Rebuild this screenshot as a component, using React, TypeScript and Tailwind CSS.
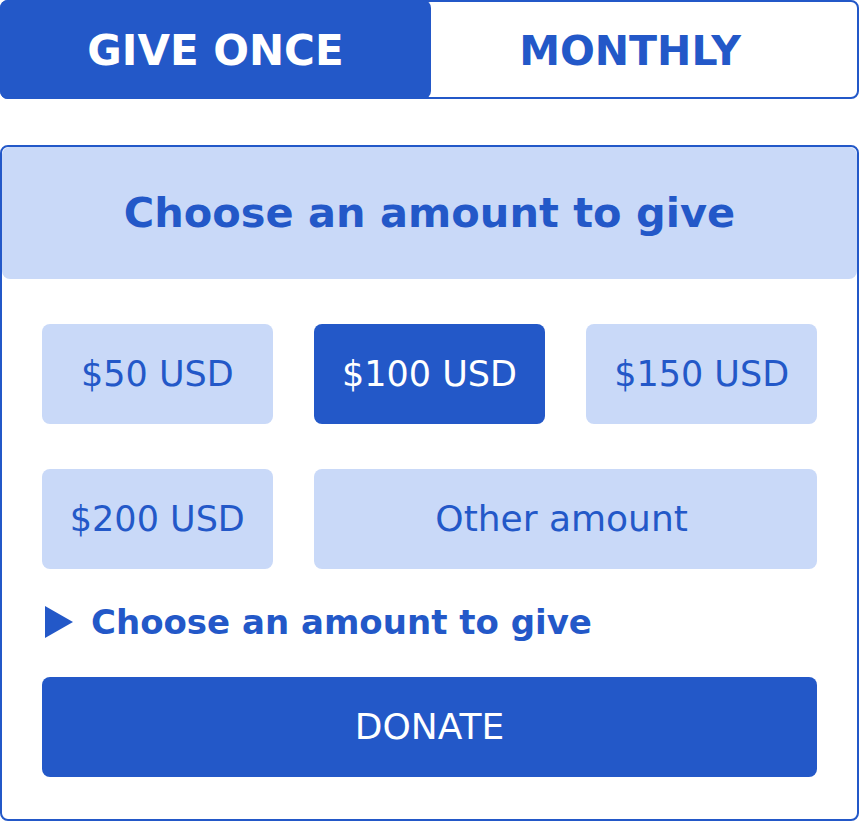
import { useState } from 'react';

const amounts = ['$50 USD', '$100 USD', '$150 USD', '$200 USD'];

export default function App() {
  const [tab, setTab] = useState<'once' | 'monthly'>('once');
  const [selected, setSelected] = useState('$100 USD');

  return (
    <div className="w-[859px] h-[821px] bg-white text-[#2358c8]" style={{ fontFamily: '"DejaVu Sans", sans-serif' }}>
      {/* 탭 */}
      <div className="flex h-[99px] rounded-lg border-2 border-[#2358c8]">
        <button
          className={`-my-[2px] -ml-[2px] w-[431px] rounded-lg pt-[3px] text-[42px] font-bold leading-none ${tab === 'once' ? 'bg-[#2358c8] text-white' : 'text-[#2358c8]'}`}
          onClick={() => setTab('once')}
        >
          GIVE ONCE
        </button>
        <button
          className={`flex-1 rounded-lg pr-[28px] pt-[3px] text-[41px] font-bold leading-none ${tab === 'monthly' ? 'bg-[#2358c8] text-white' : 'text-[#2358c8]'}`}
          onClick={() => setTab('monthly')}
        >
          MONTHLY
        </button>
      </div>

      {/* 카드 */}
      <div className="mt-[46px] h-[676px] rounded-lg border-2 border-[#2358c8]">
        <div className="flex h-[132px] items-center justify-center rounded-lg bg-[#c9d9f8]">
          <h2 className="text-[41.5px] font-bold leading-none">Choose an amount to give</h2>
        </div>

        <div className="px-[40px] pt-[45px]">
          <div className="grid grid-cols-3 gap-x-[41.5px] gap-y-[45px]">
            {amounts.map(a => (
              <button
                key={a}
                onClick={() => setSelected(a)}
                className={`h-[100px] rounded-lg text-[35px] leading-none ${selected === a ? 'bg-[#2358c8] text-white' : 'bg-[#c9d9f8] text-[#2358c8]'}`}
              >
                {a}
              </button>
            ))}
            <button
              onClick={() => setSelected('other')}
              className={`col-span-2 h-[100px] rounded-lg pr-[8px] text-[36px] leading-none ${selected === 'other' ? 'bg-[#2358c8] text-white' : 'bg-[#c9d9f8] text-[#2358c8]'}`}
            >
              Other amount
            </button>
          </div>

          <div className="mt-[33px] flex h-[40px] items-center">
            <svg width="28" height="32" viewBox="0 0 28 32" className="ml-[3px] shrink-0">
              <polygon points="0,0 28,16 0,32" fill="#2358c8" />
            </svg>
            <span className="ml-[18px] text-[34px] font-bold leading-none">Choose an amount to give</span>
          </div>

          <button className="mt-[35px] flex h-[100px] w-full items-center justify-center rounded-lg bg-[#2358c8] text-[36px] leading-none text-white">
            DONATE
          </button>
        </div>
      </div>
    </div>
  );
}
